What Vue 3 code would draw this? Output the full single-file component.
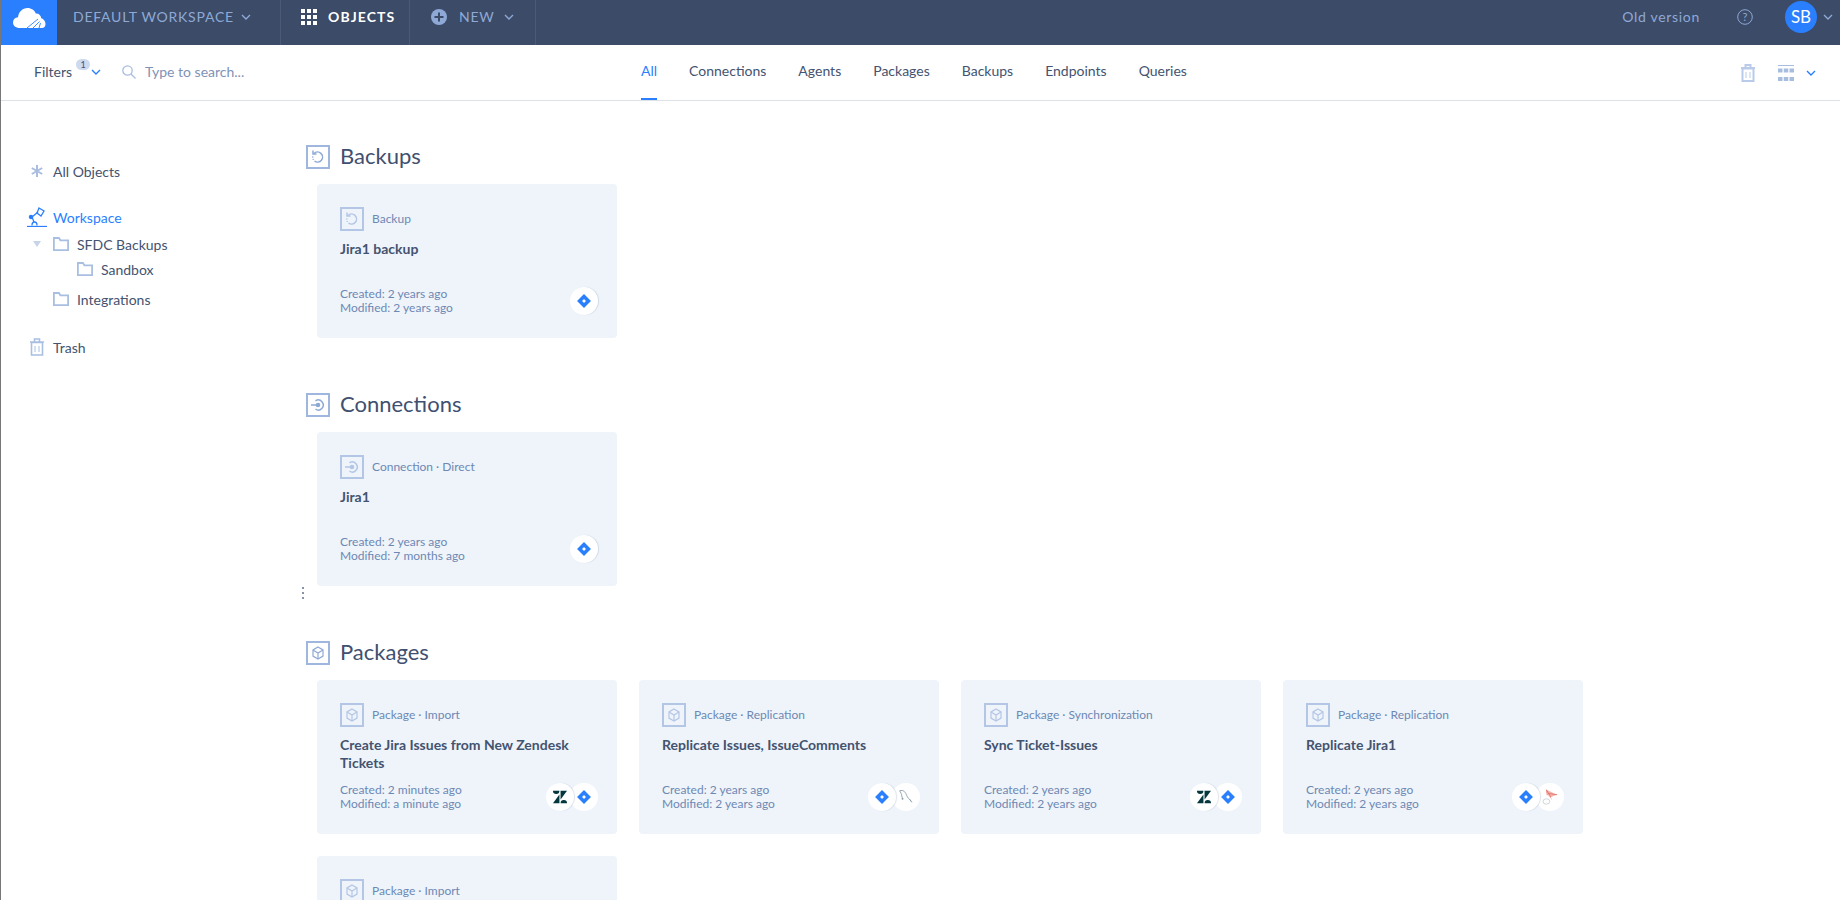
<template>
  <div class="app">
    <header class="topbar">
      <div class="logo">
        <svg width="34" height="22" viewBox="0 0 34 22">
          <path d="M8 21C3.500 21 1 18.500 1 15.500C1 12.500 3 10.500 6 10.300C6.500 5 10.500 1 15.500 1C19.500 1 22.500 3.300 23.800 6.500C27 6.300 29 8.500 29.300 11.200C31.800 12 33.500 14.300 33.500 17C33.500 19.500 32 21 30 21Z" fill="#fff" />
          <path d="M15 21L26 12M21 21L27.500 14.500M27 21L28.500 16" stroke="#2a7fff" stroke-width=".9" fill="none" />
        </svg>
      </div>
      <div class="top-item workspace">
        <span class="top-label">DEFAULT WORKSPACE</span>
        <svg class="chev" width="10" height="6" viewBox="0 0 10 6"><path d="M1 1l4 4 4-4" /></svg>
      </div>
      <div class="top-item objects">
        <svg width="16" height="16" viewBox="0 0 16 16" fill="#fff">
          <template v-for="y in [0, 6, 12]" :key="y">
            <rect v-for="x in [0, 6, 12]" :key="x" :x="x" :y="y" width="4" height="4" />
          </template>
        </svg>
        <span class="top-active">OBJECTS</span>
      </div>
      <div class="top-item new">
        <svg width="16" height="16" viewBox="0 0 16 16">
          <circle cx="8" cy="8" r="8" fill="#8fa9d6" />
          <path d="M8 3.500v9M3.500 8h9" stroke="#3b4b68" stroke-width="2" />
        </svg>
        <span class="top-label">NEW</span>
        <svg class="chev" width="10" height="6" viewBox="0 0 10 6"><path d="M1 1l4 4 4-4" /></svg>
      </div>
      <div class="top-right">
        <span class="old">Old version</span>
        <svg class="help" width="16" height="16" viewBox="0 0 16 16">
          <circle cx="8" cy="8" r="7.300" fill="none" stroke="#8fa9d6" />
          <text x="8" y="12" text-anchor="middle" class="help-mark">?</text>
        </svg>
        <span class="avatar">SB</span>
        <svg class="chev" width="10" height="6" viewBox="0 0 10 6"><path d="M1 1l4 4 4-4" /></svg>
      </div>
    </header>

    <div class="toolbar">
      <div class="filters">
        <span class="filters-text">Filters</span>
        <span class="badge">1</span>
        <svg class="chev blue" width="10" height="6" viewBox="0 0 10 6"><path d="M1 1l4 4 4-4" /></svg>
      </div>
      <div class="search">
        <svg width="14" height="14" viewBox="0 0 14 14" fill="none" stroke="#a9bddf" stroke-width="1.300">
          <circle cx="5.500" cy="5.500" r="4.700" />
          <path d="M9 9l4.500 4.500" />
        </svg>
        <span>Type to search...</span>
      </div>
      <nav class="tabs">
        <a v-for="(tab, i) in tabs" :key="tab" class="tab" :class="{ active: i === 0 }">{{ tab }}</a>
      </nav>
      <div class="tools">
        <svg width="14" height="18" viewBox="0 0 14 18" fill="none" stroke="#b9cbe8" stroke-width="2">
          <path d="M0 4h14M4.500 4V1h5v3M1.500 4.500h11V17h-11z" />
          <path d="M5 8v6M9 8v6" stroke-width="1" />
        </svg>
        <svg class="grid-ico" width="16" height="16" viewBox="0 0 16 16" fill="#a7bde0">
          <rect x="0" y="0" width="16" height="1" />
          <template v-for="y in [3.500, 12]" :key="y">
            <rect v-for="x in [0, 5.750, 11.500]" :key="x" :x="x" :y="y" width="4.500" height="4" />
          </template>
        </svg>
        <svg class="chev blue" width="10" height="6" viewBox="0 0 10 6"><path d="M1 1l4 4 4-4" /></svg>
      </div>
    </div>

    <div class="content">
      <aside class="sidebar">
        <div class="side-row all">
          <svg class="side-ico" width="14" height="14" viewBox="0 0 14 14" stroke="#a9bddf" stroke-width="2">
            <path d="M7 1v12M1.800 4l10.400 6M1.800 10l10.400-6" />
          </svg>
          <span>All Objects</span>
        </div>
        <div class="side-row ws">
          <svg class="side-ico" width="20" height="20" viewBox="0 0 20 20" fill="none" stroke="#2a7fff" stroke-width="1.300">
            <path d="M0 19.500h20" />
            <path d="M5 18.500c0-2 1-3.500 2.500-3.500s2.500 1.500 2.500 3.500" />
            <path d="M5 10l2 5M5 10l6-5" />
            <circle cx="4" cy="10" r="1.600" fill="#2a7fff" />
            <path d="M12 1l5 3-3 5-4-3z" />
          </svg>
          <span>Workspace</span>
        </div>
        <div v-for="node in tree" :key="node.name" class="side-row" :class="node.cls">
          <svg v-if="node.open" class="caret" width="8" height="6" viewBox="0 0 8 6"><path d="M0 0h8L4 6z" fill="#c6d4ea" /></svg>
          <svg class="folder" width="16" height="14" viewBox="0 0 16 14" fill="none" stroke="#a9bfe2" stroke-width="1.800">
            <path d="M.9 13.100V1h5l1.500 2.300h7.700v9.800z" />
          </svg>
          <span>{{ node.name }}</span>
        </div>
        <div class="side-row trash">
          <svg class="side-ico" width="14" height="18" viewBox="0 0 14 18" fill="none" stroke="#a9bfe2" stroke-width="1.600">
            <path d="M0 4h14M4.500 4V1h5v3M1.500 4.500h11V17h-11z" />
            <path d="M5 8v6M9 8v6" stroke-width="1" />
          </svg>
          <span>Trash</span>
        </div>
        <div class="handle"><i></i><i></i><i></i></div>
      </aside>

      <main class="main">
        <section v-for="group in groups" :key="group.title" class="group">
          <h2 class="group-head">
            <span class="type-ico strong"><svg width="20" height="20" viewBox="0 0 20 20" v-html="icons[group.icon]"></svg></span>
            <span class="group-title">{{ group.title }}</span>
          </h2>
          <div class="cards">
            <article v-for="card in group.cards" :key="card.type + card.name" class="card">
              <div class="card-type">
                <span class="type-ico"><svg width="20" height="20" viewBox="0 0 20 20" v-html="icons[group.icon]"></svg></span>
                <span class="type-text">{{ card.type }}</span>
              </div>
              <template v-if="card.name">
                <h3 class="card-name">{{ card.name }}</h3>
                <div class="card-foot">
                  <div class="meta">
                    <div>Created: {{ card.created }}</div>
                    <div>Modified: {{ card.modified }}</div>
                  </div>
                  <div class="services">
                    <span v-for="s in card.services" :key="s" class="service">
                      <svg width="20" height="20" viewBox="0 0 20 20" v-html="logos[s]"></svg>
                    </span>
                  </div>
                </div>
              </template>
            </article>
          </div>
        </section>
      </main>
    </div>
  </div>
</template>

<script setup>
const tabs = ['All', 'Connections', 'Agents', 'Packages', 'Backups', 'Endpoints', 'Queries']

const tree = [
  { name: 'SFDC Backups', cls: 'lvl1', open: true },
  { name: 'Sandbox', cls: 'lvl2' },
  { name: 'Integrations', cls: 'lvl1 last' },
]

const icons = {
  backup: '<g fill="none" stroke="currentColor" stroke-width="1.500"><path d="M6 6.500A5 5 0 1 1 6.500 14" /><path d="M5 3.500v3.500h3.500" /></g><g fill="currentColor"><circle cx="4.800" cy="10" r=".8" /><circle cx="5.200" cy="12.400" r=".7" /></g>',
  connection: '<g fill="none" stroke="currentColor" stroke-width="1.500"><path d="M7.500 5.800A5 5 0 1 1 7.500 14.200" /><path d="M3 10h7" /></g><circle cx="10" cy="10" r="2.300" fill="currentColor" />',
  pkg: '<g fill="none" stroke="currentColor" stroke-width="1.200"><path d="M10 4l5 2.900v6.200L10 16l-5-2.900V6.900z" /><path d="M5 6.900L10 10l5-3.100M10 10v6" /></g>',
}

const logos = {
  jira: '<path d="M10 2.300L17.700 10 10 17.700 2.300 10z" fill="#2a7fff" /><rect x="8.500" y="8.500" width="3" height="3" transform="rotate(45 10 10)" fill="#fff" />',
  zendesk: '<g transform="translate(2.200 2.200) scale(.65)" fill="#03363d"><path d="M11 7.600V22.600H0z" /><path d="M11 1.400a5.500 5.500 0 0 1-11 0z" /><path d="M13 16.400V1.400h11z" /><path d="M13 22.600a5.500 5.500 0 0 1 11 0z" /></g>',
  mysql: '<path d="M3 3c4-1 6 1 7.500 4.500 1 3 3 5 5.500 7M3 3l2 4 1 5" fill="none" stroke="#8197a3" stroke-width=".9" /><circle cx="6.200" cy="12" r="1" fill="#8197a3" /><path d="M14 12.500l2.500 3.500" stroke="#8197a3" stroke-width="1" />',
  mssql: '<path d="M6 2l12 5.500-7 2.500 1.500 3.500-5-6z" fill="#f3b3ad" /><path d="M6 2l5 8M18 7.500L8 6M6 2l1 6" stroke="#e2665f" stroke-width=".8" fill="none" /><ellipse cx="6" cy="15" rx="3.800" ry="3" fill="none" stroke="#c4cad1" stroke-width=".9" />',
}

const groups = [
  {
    title: 'Backups',
    icon: 'backup',
    cards: [{ type: 'Backup', name: 'Jira1 backup', created: '2 years ago', modified: '2 years ago', services: ['jira'] }],
  },
  {
    title: 'Connections',
    icon: 'connection',
    cards: [{ type: 'Connection · Direct', name: 'Jira1', created: '2 years ago', modified: '7 months ago', services: ['jira'] }],
  },
  {
    title: 'Packages',
    icon: 'pkg',
    cards: [
      { type: 'Package · Import', name: 'Create Jira Issues from New Zendesk Tickets', created: '2 minutes ago', modified: 'a minute ago', services: ['zendesk', 'jira'] },
      { type: 'Package · Replication', name: 'Replicate Issues, IssueComments', created: '2 years ago', modified: '2 years ago', services: ['jira', 'mysql'] },
      { type: 'Package · Synchronization', name: 'Sync Ticket-Issues', created: '2 years ago', modified: '2 years ago', services: ['zendesk', 'jira'] },
      { type: 'Package · Replication', name: 'Replicate Jira1', created: '2 years ago', modified: '2 years ago', services: ['jira', 'mssql'] },
      // the fifth card runs off the bottom of the window, only its type shows
      { type: 'Package · Import' },
    ],
  },
]
</script>

<style>
html,
body {
  margin: 0;
  overflow: hidden;
  background: #fff;
}
</style>

<style scoped>
.app {
  height: 900px;
  overflow: hidden;
  border-left: 1px solid #777;
  font-family: Lato, "Open Sans", sans-serif;
  font-size: 14px;
  color: #44536f;
  background: #fff;
}

.topbar {
  display: flex;
  height: 45px;
  background: #3b4b68;
}
.logo {
  width: 56px;
  background: #2a7fff;
  display: flex;
  justify-content: center;
  padding-top: 7px;
  box-sizing: border-box;
}
.top-item {
  display: flex;
  align-items: center;
  height: 33px;
  padding-bottom: 12px;
  border-right: 1px solid #4a5a78;
}
.workspace {
  width: 207px;
  padding-left: 16px;
  gap: 7px;
}
.top-label {
  color: #8fa9d6;
  letter-spacing: .75px;
}
.top-active {
  color: #fff;
  font-weight: 700;
  letter-spacing: 1.1px;
}
.objects {
  width: 108px;
  padding-left: 20px;
  gap: 11px;
}
.new {
  width: 104px;
  padding-left: 21px;
  gap: 12px;
}
.new .chev {
  margin-left: -3px;
}
.chev {
  fill: none;
  stroke: #8fa9d6;
  stroke-width: 1.400;
  flex: none;
}
.chev.blue {
  stroke: #2a7fff;
}
.top-right {
  margin-left: auto;
  display: flex;
  align-items: center;
  height: 33px;
  padding-right: 7px;
}
.old {
  color: #8fa9d6;
  letter-spacing: .7px;
}
.help {
  margin-left: 37px;
}
.help-mark {
  fill: #8fa9d6;
  font-size: 11px;
  font-family: Lato, sans-serif;
}
.avatar {
  width: 32px;
  height: 32px;
  margin-left: 32px;
  margin-right: 6px;
  border-radius: 50%;
  background: #2a7fff;
  color: #fff;
  font-size: 17px;
  display: flex;
  align-items: center;
  justify-content: center;
}

.toolbar {
  display: flex;
  align-items: center;
  height: 55px;
  border-bottom: 1px solid #dde1e8;
  padding-left: 33px;
}
.filters {
  display: flex;
  align-items: center;
  width: 88px;
  flex: none;
  padding-bottom: 2px;
}
.filters-text {
  color: #44536f;
}
.badge {
  position: relative;
  top: -7px;
  margin: 0 1px 0 4px;
  width: 14px;
  height: 11px;
  border-radius: 6px;
  background: #cdd9ee;
  color: #44536f;
  font-size: 9px;
  line-height: 11px;
  text-align: center;
}
.search {
  display: flex;
  align-items: center;
  gap: 9px;
  width: 519px;
  flex: none;
  padding-bottom: 2px;
  color: #7f92b5;
}
.tabs {
  display: flex;
  height: 100%;
  gap: 32px;
}
.tab {
  display: flex;
  align-items: center;
  height: 100%;
  box-sizing: border-box;
  border-bottom: 2px solid transparent;
  padding-bottom: 2px;
  margin-bottom: -1px;
  color: #44536f;
}
.tab.active {
  color: #2a7fff;
  border-bottom-color: #2a7fff;
}
.tools {
  margin-left: auto;
  display: flex;
  align-items: center;
  padding-right: 24px;
}
.grid-ico {
  margin: 0 12px 0 23px;
}

.content {
  display: flex;
}
.sidebar {
  position: relative;
  width: 305px;
  flex: none;
  height: 799px;
}
.side-row {
  display: flex;
  align-items: center;
  height: 20px;
  padding-left: 52px;
  position: relative;
}
.side-ico {
  position: absolute;
  left: 29px;
}
.all {
  margin-top: 60px;
}
.ws {
  margin-top: 26px;
  color: #2a7fff;
}
.ws .side-ico {
  left: 26px;
}
.folder {
  margin-right: 8px;
  flex: none;
}
.caret {
  position: absolute;
  left: 32px;
}
.lvl1 {
  margin-top: 7px;
}
.lvl2 {
  padding-left: 76px;
  margin-top: 5px;
}
.last {
  margin-top: 10px;
}
.trash {
  margin-top: 28px;
}
.handle {
  position: absolute;
  left: 301px;
  top: 486px;
  display: flex;
  flex-direction: column;
  gap: 3px;
}
.handle i {
  width: 2px;
  height: 2px;
  background: #5f6f8c;
  border-radius: 50%;
}

.main {
  flex: 1;
  padding-top: 44px;
}
.group {
  margin-bottom: 55px;
}
.group-head {
  display: flex;
  align-items: center;
  gap: 10px;
  height: 24px;
  margin: 0 0 15px;
  font-size: 22px;
  font-weight: 400;
  color: #3f5070;
}
.group-title {
  margin-bottom: 4px;
}
.type-ico {
  width: 24px;
  height: 24px;
  box-sizing: border-box;
  border: 2px solid #b3c6e6;
  color: #b3c6e6;
  display: flex;
  align-items: center;
  justify-content: center;
  flex: none;
}
.type-ico svg {
  width: 20px;
  height: 20px;
}
.type-ico.strong {
  border-color: #9fb7df;
  color: #8fa9d6;
}
.cards {
  display: flex;
  flex-wrap: wrap;
  gap: 22px;
  padding-left: 11px;
}
.card {
  width: 300px;
  height: 154px;
  box-sizing: border-box;
  padding: 23px 19px 23px 23px;
  background: #eff4fb;
  border-radius: 4px;
  display: flex;
  flex-direction: column;
}
.card-type {
  display: flex;
  align-items: center;
  gap: 8px;
  font-size: 12px;
  color: #6d88b3;
}
.type-text {
  margin-bottom: 2px;
}
.card-name {
  margin: 9px 0 0;
  font-size: 14px;
  font-weight: 700;
  line-height: 18px;
  color: #44536f;
}
.card-foot {
  margin-top: auto;
  display: flex;
  align-items: flex-end;
  justify-content: space-between;
}
.meta {
  font-size: 12px;
  line-height: 14px;
  color: #6d88b3;
}
.services {
  display: flex;
}
.service {
  width: 28px;
  height: 28px;
  border-radius: 50%;
  background: #fff;
  display: flex;
  align-items: center;
  justify-content: center;
  margin-left: -4px;
  position: relative;
}
.service:first-child {
  z-index: 1;
  box-shadow: 1px 0 1px rgba(120, 140, 170, .25);
}
.service svg {
  width: 18px;
  height: 18px;
}
</style>
